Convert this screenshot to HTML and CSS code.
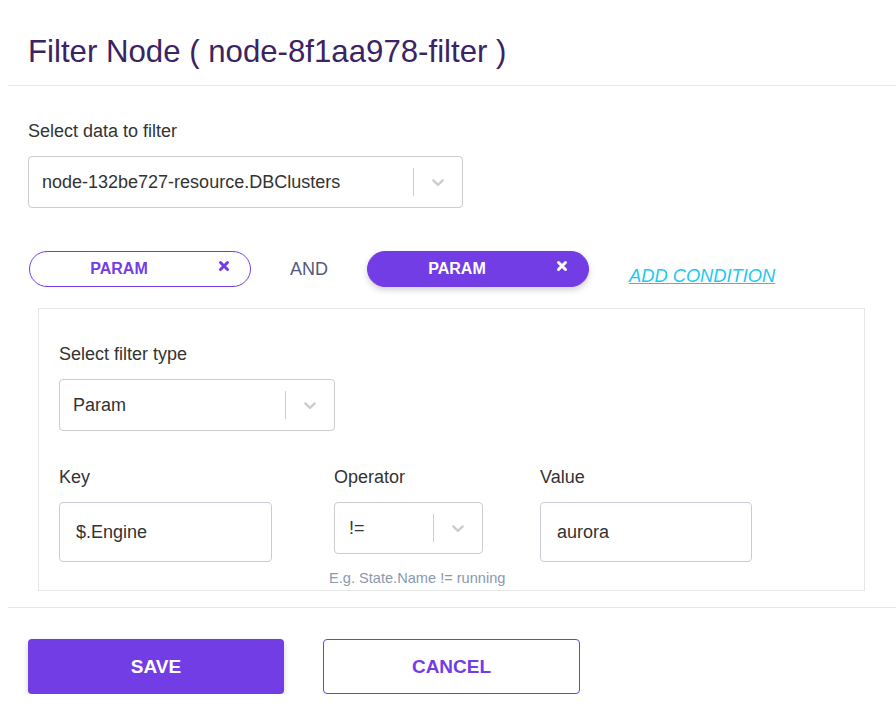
FILE: index.html
```html
<!DOCTYPE html>
<html lang="en">
<head>
    <meta charset="UTF-8">
    <meta name="viewport" content="width=device-width, initial-scale=1.0">
    <title>Filter Node</title>
    <link rel="stylesheet" href="styles.css">
</head>
<body>
    <div class="modal">
        <div class="modal-header">
            <h1>Filter Node ( node-8f1aa978-filter )</h1>
        </div>

        <div class="modal-body">
            <label class="field-label">Select data to filter</label>
            <div class="select select-data">
                <span class="select-value">node-132be727-resource.DBClusters</span>
                <span class="select-sep"></span>
                <svg class="chevron" viewBox="0 0 20 20" width="20" height="20"><path d="M4.516 7.548c0.436-0.446 1.043-0.481 1.576 0l3.908 3.747 3.908-3.747c0.533-0.481 1.141-0.446 1.574 0 0.436 0.445 0.408 1.197 0 1.615-0.406 0.418-4.695 4.502-4.695 4.502-0.217 0.223-0.502 0.335-0.787 0.335s-0.57-0.112-0.789-0.335c0 0-4.287-4.084-4.695-4.502s-0.436-1.170 0-1.615z"/></svg>
            </div>

            <div class="conditions">
                <div class="chip">
                    <span>PARAM</span>
                    <svg class="chip-close" viewBox="0 0 12 12" width="12" height="12"><path d="M2.5 2.5 L9.5 9.5 M9.5 2.5 L2.5 9.5"/></svg>
                </div>
                <span class="and">AND</span>
                <div class="chip chip-active">
                    <span>PARAM</span>
                    <svg class="chip-close" viewBox="0 0 12 12" width="12" height="12"><path d="M2.5 2.5 L9.5 9.5 M9.5 2.5 L2.5 9.5"/></svg>
                </div>
                <a class="add-condition" href="#">ADD CONDITION</a>
            </div>

            <div class="panel">
                <label class="field-label">Select filter type</label>
                <div class="select select-type">
                    <span class="select-value">Param</span>
                    <span class="select-sep"></span>
                    <svg class="chevron" viewBox="0 0 20 20" width="20" height="20"><path d="M4.516 7.548c0.436-0.446 1.043-0.481 1.576 0l3.908 3.747 3.908-3.747c0.533-0.481 1.141-0.446 1.574 0 0.436 0.445 0.408 1.197 0 1.615-0.406 0.418-4.695 4.502-4.695 4.502-0.217 0.223-0.502 0.335-0.787 0.335s-0.57-0.112-0.789-0.335c0 0-4.287-4.084-4.695-4.502s-0.436-1.170 0-1.615z"/></svg>
                </div>

                <div class="row">
                    <div class="col col-key">
                        <label class="field-label">Key</label>
                        <div class="text-input">$.Engine</div>
                    </div>
                    <div class="col col-op">
                        <label class="field-label">Operator</label>
                        <div class="select select-op">
                            <span class="select-value">!=</span>
                            <span class="select-sep"></span>
                            <svg class="chevron" viewBox="0 0 20 20" width="20" height="20"><path d="M4.516 7.548c0.436-0.446 1.043-0.481 1.576 0l3.908 3.747 3.908-3.747c0.533-0.481 1.141-0.446 1.574 0 0.436 0.445 0.408 1.197 0 1.615-0.406 0.418-4.695 4.502-4.695 4.502-0.217 0.223-0.502 0.335-0.787 0.335s-0.57-0.112-0.789-0.335c0 0-4.287-4.084-4.695-4.502s-0.436-1.170 0-1.615z"/></svg>
                        </div>
                        <div class="hint">E.g. State.Name != running</div>
                    </div>
                    <div class="col col-value">
                        <label class="field-label">Value</label>
                        <div class="text-input">aurora</div>
                    </div>
                </div>
            </div>
        </div>

        <div class="modal-footer">
            <button type="button" class="btn btn-primary">SAVE</button>
            <button type="button" class="btn btn-outline">CANCEL</button>
        </div>
    </div>
</body>
</html>
```

FILE: styles.css
```css
body {
    font-family: "Liberation Sans", Arial, sans-serif;
    margin: 0;
    padding: 0;
    background-color: #ffffff;
    color: #333333;
}
.modal {
    margin-left: 8px;
    width: 888px;
}
.modal-header {
    padding: 30px 20px 0;
    height: 55px;
    border-bottom: 1px solid #e6e6e6;
}
h1 {
    margin: 0;
    font-weight: normal;
    font-size: 31.2px;
    line-height: 44px;
    color: #3b2461;
}
.modal-body {
    padding: 34px 20px 0;
}
.field-label {
    display: block;
    font-size: 18px;
    line-height: 22px;
    color: #333333;
    margin-bottom: 14px;
}
.select {
    display: flex;
    align-items: center;
    height: 52px;
    box-sizing: border-box;
    border: 1px solid #cccccc;
    border-radius: 4px;
    padding-left: 13px;
}
.select-value {
    flex: 1;
    font-size: 18px;
    color: #333333;
}
.select-sep {
    width: 1px;
    height: 28px;
    background-color: #cccccc;
}
.chevron {
    fill: #cccccc;
    margin: 0 14px 0 14px;
}
.select-data {
    width: 435px;
}
.conditions {
    display: flex;
    align-items: center;
    margin-top: 43px;
    height: 36px;
}
.chip {
    position: relative;
    width: 222px;
    height: 36px;
    box-sizing: border-box;
    border: 1px solid #733de6;
    border-radius: 18px;
    display: flex;
    align-items: center;
    justify-content: center;
    font-size: 16px;
    font-weight: bold;
    color: #733de6;
}
.chip:first-child {
    margin-left: 1px;
}
.chip span {
    margin-left: -42px;
}
.chip-close {
    position: absolute;
    right: 20px;
    top: 8px;
    stroke: #733de6;
    stroke-width: 3;
    stroke-linecap: round;
}
.chip-active {
    background-color: #733de6;
    color: #ffffff;
    box-shadow: 0 3px 6px rgba(0, 0, 0, 0.18);
}
.chip-active .chip-close {
    stroke: #ffffff;
}
.and {
    font-size: 18px;
    color: #555a78;
    margin: 0 39px;
}
.add-condition {
    margin-left: 40px;
    margin-top: 14px;
    font-size: 18.3px;
    font-style: italic;
    color: #1ec9ef;
}
.panel {
    margin: 21px 10px 0 10px;
    width: 827px;
    box-sizing: border-box;
    border: 1px solid #e6e6e6;
    padding: 34px 20px 0;
    height: 283px;
}
.select-type {
    width: 276px;
}
.row {
    display: flex;
    margin-top: 35px;
}
.col-key {
    width: 213px;
    margin-right: 62px;
}
.col-op {
    width: 149px;
    margin-right: 57px;
}
.col-value {
    width: 212px;
}
.text-input {
    height: 60px;
    box-sizing: border-box;
    border: 1px solid #c8ccd6;
    border-radius: 4px;
    padding-left: 16px;
    display: flex;
    align-items: center;
    font-size: 18px;
    color: #333333;
}
.select-op .select-value {
    margin-left: 1px;
}
.hint {
    margin: 16px 0 0 -5px;
    font-size: 14.6px;
    line-height: 16px;
    white-space: nowrap;
    color: #8a99b0;
}
.modal-footer {
    margin-top: 16px;
    border-top: 1px solid #e6e6e6;
    padding: 31px 20px 0;
    display: flex;
    gap: 39px;
}
.btn {
    width: 256px;
    height: 55px;
    border-radius: 4px;
    font-family: "Liberation Sans", Arial, sans-serif;
    font-size: 19px;
    font-weight: bold;
    cursor: pointer;
}
.btn-primary {
    background-color: #733de6;
    color: #ffffff;
    border: none;
    box-shadow: 0 3px 6px rgba(0, 0, 0, 0.18);
}
.btn-outline {
    width: 257px;
    background-color: #ffffff;
    color: #733de6;
    border: 1px solid #733de6;
}
```
